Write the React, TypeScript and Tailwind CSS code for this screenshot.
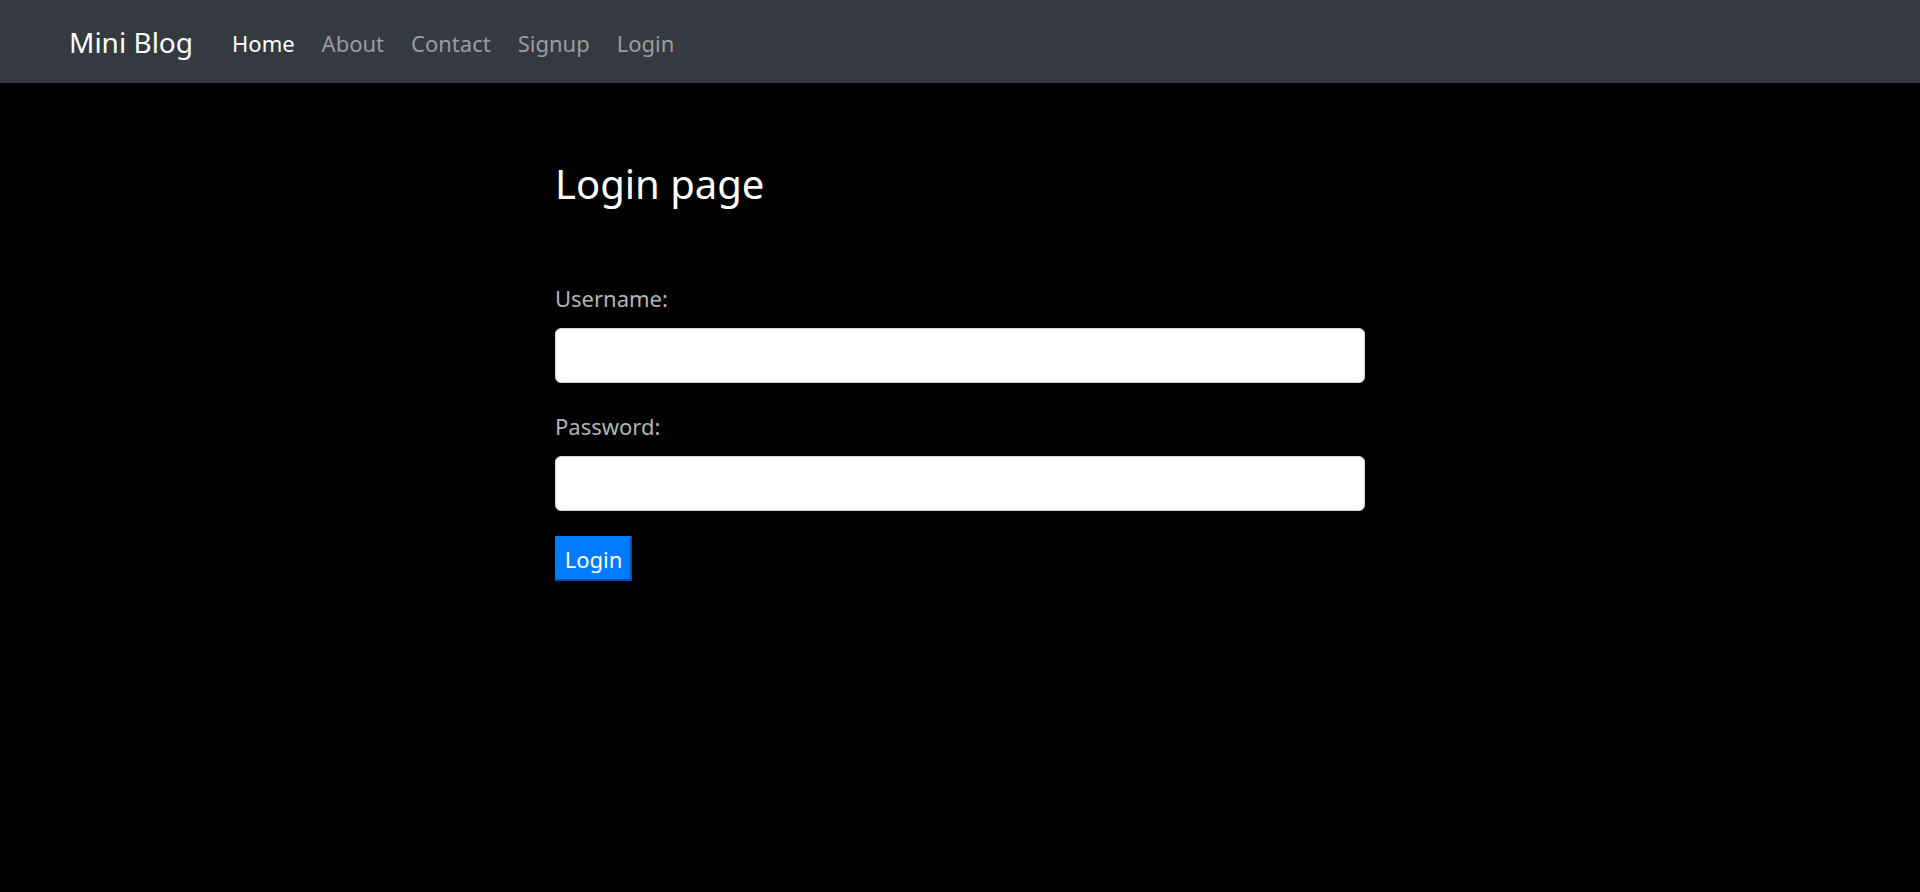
import React from "react";

const links = ["Home", "About", "Contact", "Signup", "Login"];

export default function App() {
  return (
    <div className="min-h-[892px] bg-black font-['Noto_Sans',sans-serif]">
      <nav className="flex h-[83px] items-center bg-[#343a40] px-[69px]">
        <span className="mr-[39px] text-[28px] leading-none text-white">Mini Blog</span>
        <div className="mt-[3px] flex gap-[27px]">
          {links.map((l, i) => (
            <a
              key={l}
              className={`text-[22px] leading-none ${i === 0 ? "text-white" : "text-[#9a9da0]"}`}
            >
              {l}
            </a>
          ))}
        </div>
      </nav>

      <main className="mx-auto w-[810px] pt-[77px]">
        <h1 className="text-[40px] leading-[48px] text-white">Login page</h1>
        <form className="mt-[74px] flex flex-col">
          <label className="text-[22px] leading-[33px] text-[#b4b4b4]">Username:</label>
          <input className="mt-[13px] h-[55px] rounded-[6px] border border-[#ced4da] bg-white px-3" />
          <label className="mt-[27px] text-[22px] leading-[33px] text-[#b4b4b4]">Password:</label>
          <input
            type="password"
            className="mt-[13px] h-[55px] rounded-[6px] border border-[#ced4da] bg-white px-3"
          />
          <div className="mt-[25px]">
            <button
              type="button"
              className="h-[45px] w-[77px] border-2 border-t-[#007bff] border-l-[#007bff] border-r-[#0a4fa8] border-b-[#0a4fa8] bg-[#007bff] text-[22px] leading-none text-white"
            >
              Login
            </button>
          </div>
        </form>
      </main>
    </div>
  );
}
